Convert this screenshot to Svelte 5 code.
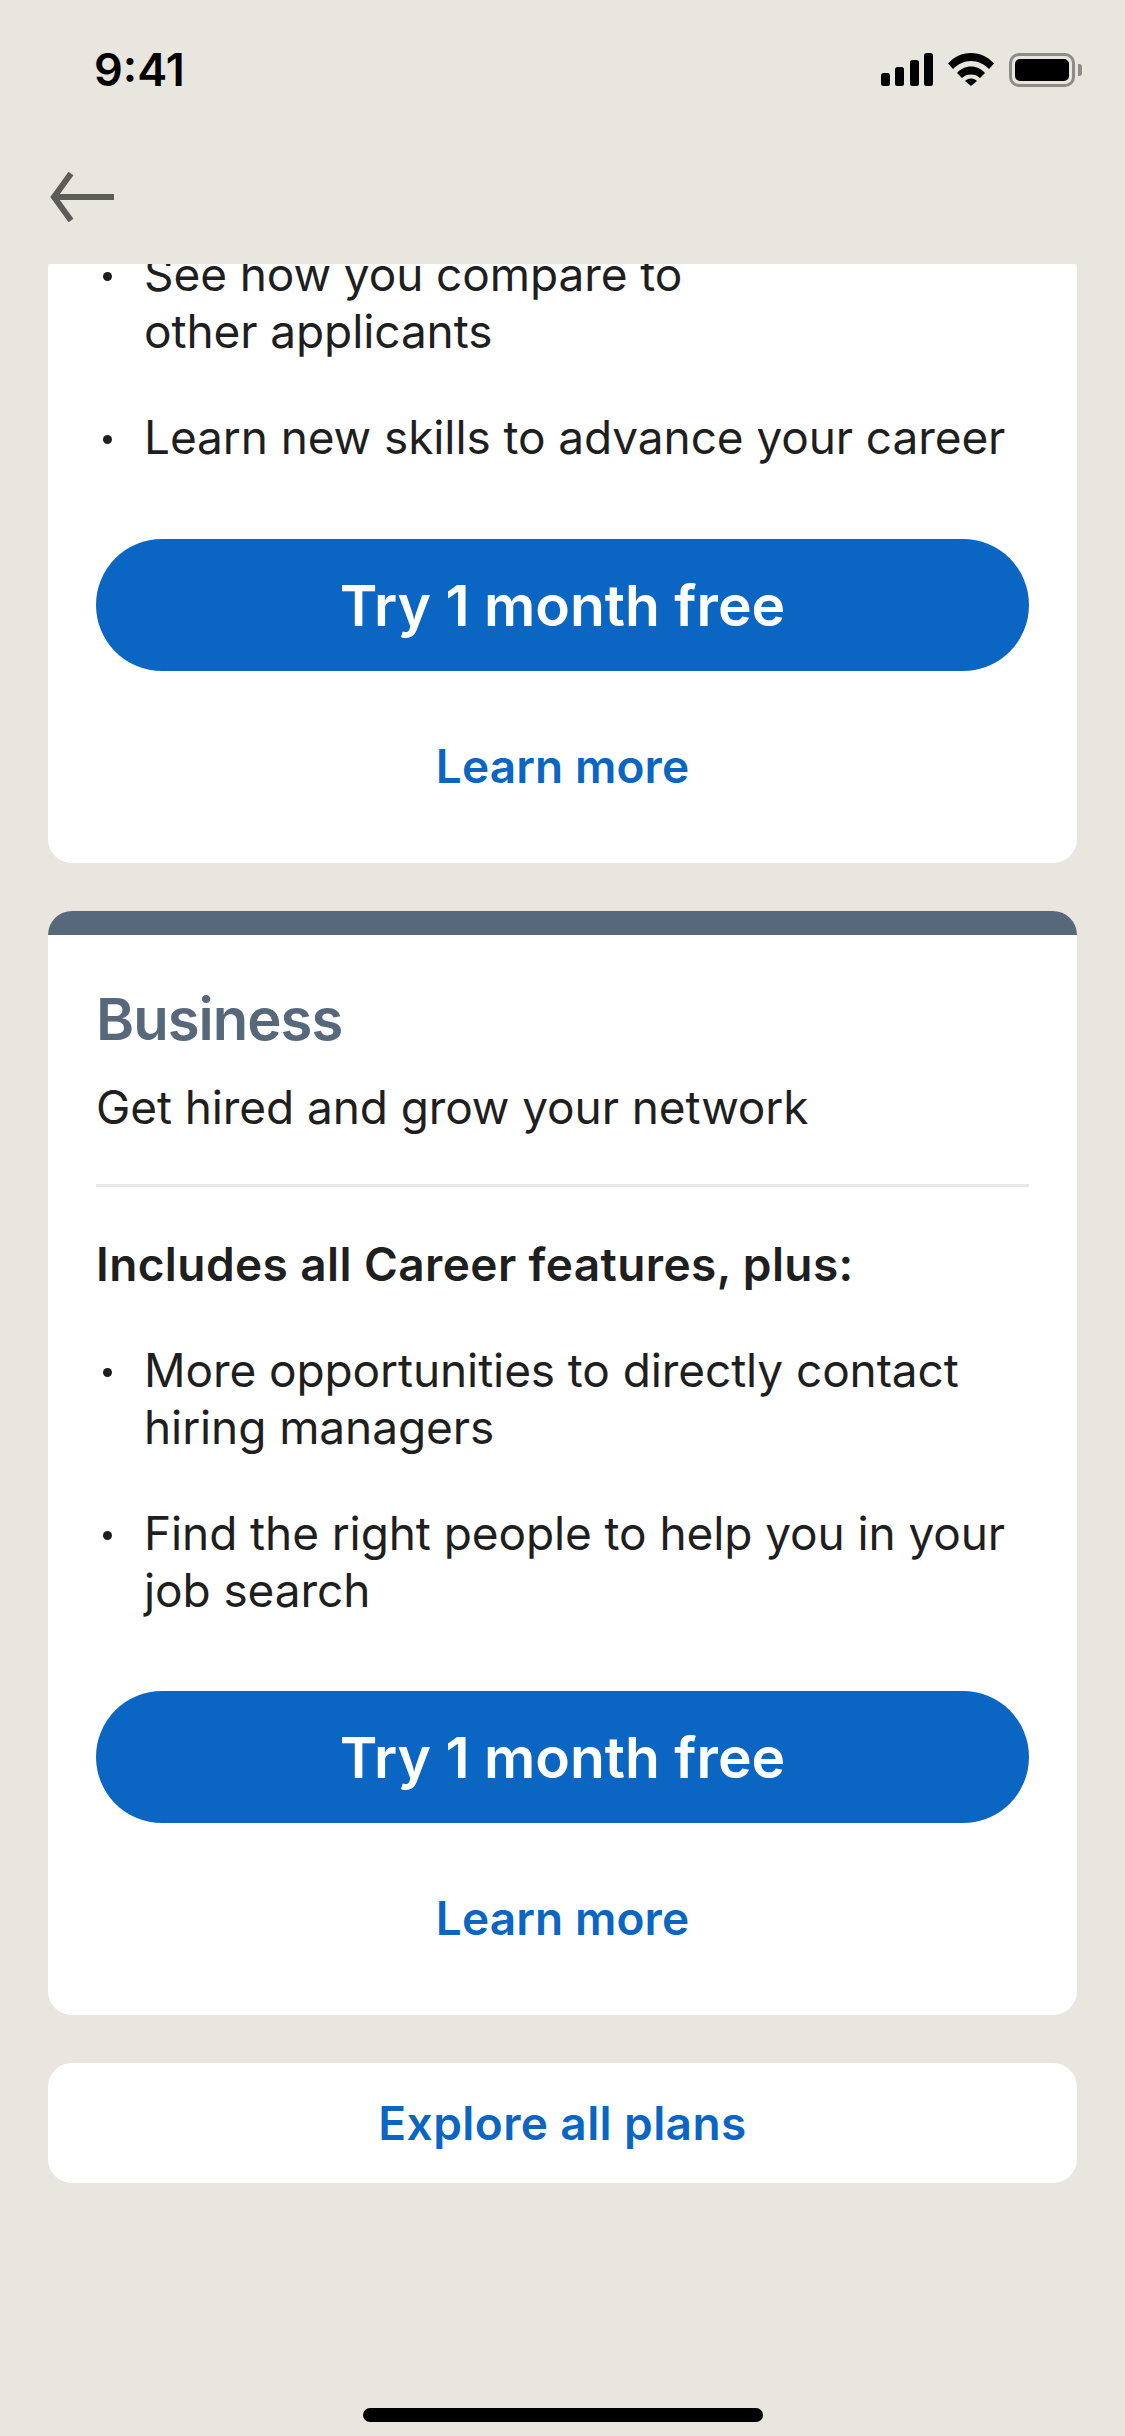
<script>
    const firstPlan = [
        ["See how you compare to", "other applicants"],
        ["Learn new skills to advance your career"]
    ];
    const businessPlan = [
        ["More opportunities to directly contact", "hiring managers"],
        ["Find the right people to help you in your", "job search"]
    ];
</script>

<div class="screen">
    <header class="top">
        <div class="status">
            <span class="time">9:41</span>
            <div class="status-icons">
                <svg width="52" height="33" viewBox="0 0 52 33" fill="#000">
                    <rect x="0" y="20" width="9" height="13" rx="2.5"/>
                    <rect x="14" y="14" width="9" height="19" rx="2.5"/>
                    <rect x="29" y="7" width="9" height="26" rx="2.5"/>
                    <rect x="43" y="0" width="9" height="33" rx="2.5"/>
                </svg>
                <svg width="46" height="33" viewBox="0 0 46 33" fill="#000">
                    <path d="M0 10.500C6 4 14 0 23 0s17 4 23 10.500l-5 5.500C36 11 30 8 23 8S10 11 5 16z"/>
                    <path d="M9 20C12.500 16 17.500 13.500 23 13.500S33.500 16 37 20l-5 5C29.500 22.500 26.500 21.500 23 21.500S16.500 22.500 14 25z"/>
                    <path d="M17 28C18.500 26.500 20.500 25.500 23 25.500s4.500 1 6 2.500L23 33z"/>
                </svg>
                <div class="battery">
                    <div class="battery-body"><div class="battery-fill"></div></div>
                    <div class="battery-cap"></div>
                </div>
            </div>
        </div>
        <svg class="back" width="64" height="50" viewBox="0 0 64 50" fill="none" stroke="#5e5c58" stroke-width="6">
            <path d="M21 1.500L4 25l17 23.500"/>
            <path d="M4 25h60"/>
        </svg>
    </header>

    <main class="scroller">
        <section class="card clipped">
            <ul>
                {#each firstPlan as lines}
                    <li>{#each lines as line}<span>{line}</span>{/each}</li>
                {/each}
            </ul>
            <button class="primary">Try 1 month free</button>
            <button class="link">Learn more</button>
        </section>

        <section class="card business">
            <div class="band"></div>
            <div class="body">
                <h2>Business</h2>
                <p class="tagline">Get hired and grow your network</p>
                <hr />
                <p class="includes">Includes all Career features, plus:</p>
                <ul>
                    {#each businessPlan as lines}
                        <li>{#each lines as line}<span>{line}</span>{/each}</li>
                    {/each}
                </ul>
                <button class="primary">Try 1 month free</button>
                <button class="link">Learn more</button>
            </div>
        </section>

        <section class="card explore">
            <button class="link">Explore all plans</button>
        </section>
    </main>

    <div class="home-bar"></div>
</div>

<style>
    :global(body) {
        margin: 0;
        background: #e9e5df;
    }

    .screen {
        width: 1125px;
        height: 2436px;
        background: #e9e5df;
        font-family: Inter, "Liberation Sans", sans-serif;
        color: #1f1f1f;
        display: flex;
        flex-direction: column;
        overflow: hidden;
    }

    .top {
        height: 264px;
        flex: none;
        display: flex;
        flex-direction: column;
    }

    .status {
        display: flex;
        justify-content: space-between;
        align-items: center;
        height: 33px;
        margin-top: 53px;
        padding: 0 43px 0 94px;
    }

    .time {
        font-size: 45px;
        font-weight: 600;
        color: #000;
        line-height: 33px;
    }

    .status-icons {
        display: flex;
        align-items: center;
        gap: 15px;
    }

    .battery {
        display: flex;
        align-items: center;
        gap: 3px;
    }

    .battery-body {
        box-sizing: border-box;
        width: 66px;
        height: 34px;
        border: 3px solid #8f8c88;
        border-radius: 10px;
        padding: 3px;
    }

    .battery-fill {
        height: 100%;
        background: #000;
        border-radius: 5px;
    }

    .battery-cap {
        width: 4px;
        height: 12px;
        background: #8f8c88;
        border-radius: 0 3px 3px 0;
    }

    .back {
        margin: 86px 0 0 50px;
    }

    .scroller {
        flex: 1;
        overflow: hidden;
        padding: 0 48px;
        display: flex;
        flex-direction: column;
        gap: 48px;
    }

    .card {
        background: #fff;
        border-radius: 24px;
        flex: none;
    }

    .clipped {
        margin-top: -18px;
        padding: 0 48px 67px;
    }

    .clipped ul {
        padding-bottom: 1px;
    }

    .business {
        overflow: hidden;
    }

    .band {
        height: 24px;
        background: #56687a;
    }

    .body {
        padding: 0 48px 67px;
    }

    h2 {
        margin: 0;
        padding-top: 54px;
        font-size: 58px;
        line-height: 60px;
        font-weight: 600;
        letter-spacing: -1px;
        color: #56687a;
    }

    .tagline {
        margin: 30px 0 0;
        font-size: 46px;
        line-height: 57px;
        letter-spacing: -0.1px;
    }

    hr {
        margin: 48px 0 0;
        border: 0;
        height: 3px;
        background: #e8e8e8;
    }

    .includes {
        margin: 49px 0 0;
        font-size: 46px;
        line-height: 57px;
        font-weight: 600;
        letter-spacing: 0.4px;
    }

    ul {
        list-style: none;
        margin: 0;
        padding: 0;
    }

    .includes + ul {
        margin-top: 49px;
    }

    li {
        position: relative;
        padding-left: 48px;
        font-size: 46px;
        line-height: 57px;
        letter-spacing: -0.1px;
    }

    li + li {
        margin-top: 49px;
    }

    li span {
        display: block;
    }

    li::before {
        content: "";
        position: absolute;
        left: 7px;
        top: 26px;
        width: 9px;
        height: 9px;
        border-radius: 50%;
        background: #1f1f1f;
    }

    button {
        display: block;
        width: 100%;
        border: 0;
        padding: 0;
        font-family: inherit;
        cursor: pointer;
    }

    .primary {
        height: 132px;
        margin-top: 72px;
        border-radius: 66px;
        background: #0a66c2;
        color: #fff;
        font-size: 57px;
        font-weight: 600;
    }

    .link {
        height: 60px;
        margin-top: 65px;
        background: none;
        color: #0a66c2;
        font-size: 46px;
        font-weight: 600;
        letter-spacing: 0.1px;
    }

    .explore {
        height: 120px;
        display: flex;
        align-items: center;
    }

    .explore .link {
        margin-top: 0;
        letter-spacing: 0.4px;
    }

    .home-bar {
        flex: none;
        align-self: center;
        width: 400px;
        height: 14px;
        margin-bottom: 14px;
        margin-top: -28px;
        border-radius: 7px;
        background: #000;
    }
</style>
